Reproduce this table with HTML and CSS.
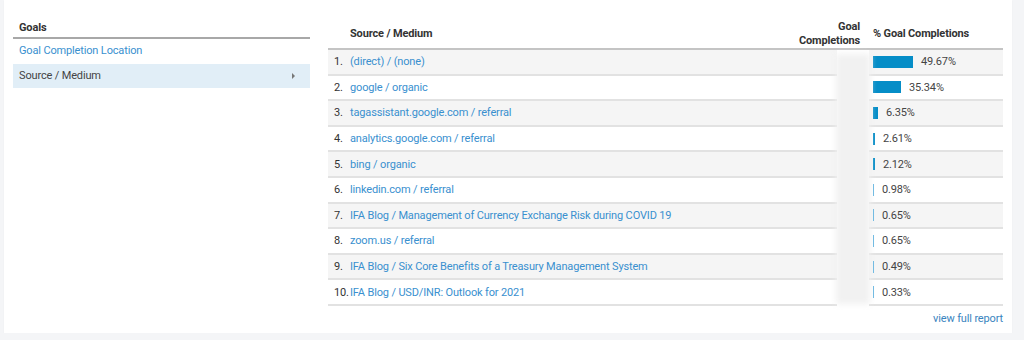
FILE: index.html
```html
<!DOCTYPE html>
<html lang="en">
<head>
  <meta charset="UTF-8"/>
  <title>Goals - Source / Medium</title>
  <link rel="stylesheet" href="styles.css">
</head>
<body>
  <div class="panel">
    <div class="nav">
      <div class="nav-head">Goals</div>
      <a class="nav-item" href="#">Goal Completion Location</a>
      <div class="nav-item active">Source / Medium<span class="arrow"></span></div>
    </div>

    <div class="report">
      <div class="table">
        <div class="th-line"></div>
        <div class="th th-src">Source / Medium</div>
        <div class="th th-goal">Goal<br>Completions</div>
        <div class="th th-pct">% Goal Completions</div>
        <div class="redact"></div>

        <div class="td src odd"><span class="num">1.</span><a href="#">(direct) / (none)</a></div>
        <div class="td pct odd"><span class="bar" style="width:40px"></span>49.67%</div>
        <div class="td src"><span class="num">2.</span><a href="#">google / organic</a></div>
        <div class="td pct"><span class="bar" style="width:28px"></span>35.34%</div>
        <div class="td src odd"><span class="num">3.</span><a href="#">tagassistant.google.com / referral</a></div>
        <div class="td pct odd"><span class="bar" style="width:5px"></span>6.35%</div>
        <div class="td src"><span class="num">4.</span><a href="#">analytics.google.com / referral</a></div>
        <div class="td pct"><span class="bar" style="width:2px"></span>2.61%</div>
        <div class="td src odd"><span class="num">5.</span><a href="#">bing / organic</a></div>
        <div class="td pct odd"><span class="bar" style="width:2px"></span>2.12%</div>
        <div class="td src"><span class="num">6.</span><a href="#">linkedin.com / referral</a></div>
        <div class="td pct"><span class="bar thin"></span>0.98%</div>
        <div class="td src odd"><span class="num">7.</span><a href="#">IFA Blog / Management of Currency Exchange Risk during COVID 19</a></div>
        <div class="td pct odd"><span class="bar thin"></span>0.65%</div>
        <div class="td src"><span class="num">8.</span><a href="#">zoom.us / referral</a></div>
        <div class="td pct"><span class="bar thin"></span>0.65%</div>
        <div class="td src odd"><span class="num">9.</span><a href="#">IFA Blog / Six Core Benefits of a Treasury Management System</a></div>
        <div class="td pct odd"><span class="bar thin"></span>0.49%</div>
        <div class="td src"><span class="num">10.</span><a href="#">IFA Blog / USD/INR: Outlook for 2021</a></div>
        <div class="td pct"><span class="bar thin"></span>0.33%</div>
      </div>
      <div class="more"><a href="#">view full report</a></div>
    </div>
  </div>
</body>
</html>
```

FILE: styles.css
```css
body {margin:0;background:#f4f5f7;font-family:Roboto,'Liberation Sans',sans-serif;font-size:11px;
      letter-spacing:-0.15px;color:#333}
a {color:#3990cf;text-decoration:none}

.panel {display:flex;margin-left:4px;width:1008px;height:333px;background:#fff;
        box-shadow:0 1px 1px rgba(0,0,0,0.06);box-sizing:border-box;padding-left:9px}

/* left nav */
.nav {width:297px;flex:none}
.nav-head {padding:21px 6px 2px;line-height:14px;font-weight:bold;border-bottom:2px solid #a8a8a8}
.nav-item {display:flex;align-items:center;padding:5px 6px;line-height:14px}
.nav-item.active {margin-top:1px;background:#e1eef7;color:#444;height:24px;padding:0 6px;box-sizing:border-box}
.arrow {margin-left:auto;margin-right:9px;width:0;height:0;
        border-top:3px solid transparent;border-bottom:3px solid transparent;border-left:3px solid #777}

/* report table */
.report {margin-left:18px;width:675px;display:flex;flex-direction:column}
.table {display:grid;grid-template-columns:509px 32px 134px;grid-template-rows:30px repeat(10,25.6px);margin-top:20px}
.th-line {grid-column:1 / 4;grid-row:1;border-bottom:2px solid #c4c4c4}
.th {grid-row:1;font-weight:bold;line-height:14px;display:flex;align-items:center;padding-bottom:2px;color:#333}
.th-src {grid-column:1;padding-left:22px}
.th-goal {grid-column:2;justify-self:end;width:max-content;text-align:right;padding-right:9px}
.th-pct {grid-column:3;padding-left:4px}
.redact {grid-column:2;grid-row:2 / 12;position:relative}
.redact::before {content:"";position:absolute;inset:4px -1px 2px;background:#f1f1f1;filter:blur(3px)}

.td {display:flex;align-items:center;border-bottom:2px solid #e2e2e2;white-space:nowrap}
.td.odd {background:#f5f5f5}
.src {grid-column:1;padding-left:6px}
.pct {grid-column:3;padding-left:4px;color:#444}
.num {width:16px;flex:none;color:#333}
.bar {display:inline-block;height:12px;background:#058dc7;margin-right:8px}
.bar.thin {width:1px;background:#5fb3e0}

.more {text-align:right;margin-top:6px;line-height:14px}
.more a {color:#3a85c0}
```
